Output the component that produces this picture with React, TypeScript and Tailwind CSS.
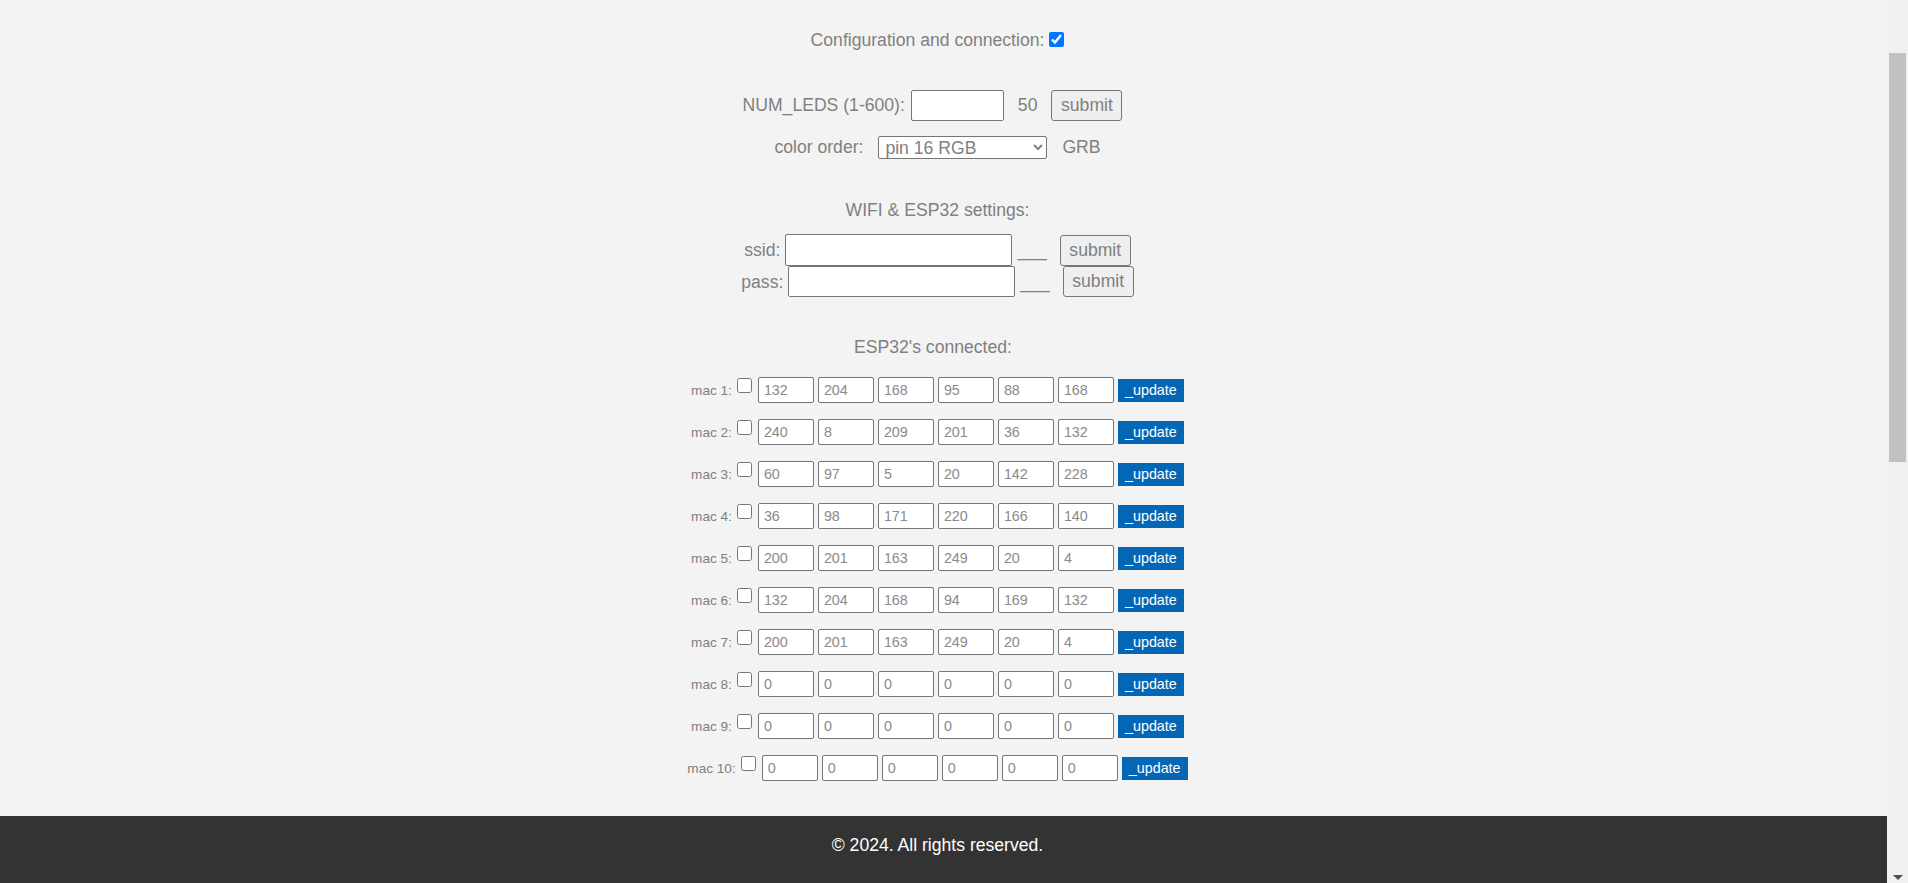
const macs: string[][] = [
  ["132", "204", "168", "95", "88", "168"],
  ["240", "8", "209", "201", "36", "132"],
  ["60", "97", "5", "20", "142", "228"],
  ["36", "98", "171", "220", "166", "140"],
  ["200", "201", "163", "249", "20", "4"],
  ["132", "204", "168", "94", "169", "132"],
  ["200", "201", "163", "249", "20", "4"],
  ["0", "0", "0", "0", "0", "0"],
  ["0", "0", "0", "0", "0", "0"],
  ["0", "0", "0", "0", "0", "0"],
];

function SubmitButton() {
  return (
    <button className="w-[71px] h-[31px] bg-[#efefef] border border-[#767676] rounded-[3px] text-[#808080] text-[17.6px] leading-none">
      submit
    </button>
  );
}

function MacRow({ index, values }: { index: number; values: string[] }) {
  return (
    <div className="flex items-center justify-center h-[26px]">
      <span className="text-[13.6px] text-[#808080] leading-none">mac {index}:</span>
      <input
        type="checkbox"
        className="w-[15px] h-[15px] ml-[5px] mr-[6px] self-start mt-[1px]"
      />
      <div className="flex gap-[4px]">
        {values.map((v, i) => (
          <input
            key={i}
            type="text"
            defaultValue={v}
            className="w-[56px] h-[26px] bg-white border border-[#767676] rounded-[2px] pl-[5px] text-[14.3px] text-[#8a8a8a]"
          />
        ))}
      </div>
      <button className="ml-[4px] w-[66px] h-[23px] bg-[#0467b5] text-white text-[14.3px] leading-none">
        _update
      </button>
    </div>
  );
}

export default function App() {
  return (
    <div
      className="h-screen overflow-hidden flex flex-col bg-[#f3f3f3] pr-[21px]"
      style={{ fontFamily: '"Liberation Sans", Arial, sans-serif' }}
    >
      <main className="flex-1 flex flex-col items-center pr-[12px] pt-[30px] text-[#808080] text-[17.6px]">
        <div className="flex items-center h-[20px]">
          <span>Configuration and connection:</span>
          <input
            type="checkbox"
            defaultChecked
            className="w-[15px] h-[15px] ml-[5px] mb-[2px] accent-[#0075ff]"
          />
        </div>

        <div className="flex items-center mt-[40px] pr-[10px]">
          <span>NUM_LEDS (1-600):</span>
          <input
            type="text"
            className="ml-[6px] w-[93px] h-[31px] bg-white border border-[#767676] rounded-[2px]"
          />
          <span className="ml-[14px]">50</span>
          <span className="ml-[14px]">
            <SubmitButton />
          </span>
        </div>

        <div className="flex items-center mt-[13px]">
          <span>color order:</span>
          <select
            defaultValue="pin 16 RGB"
            className="ml-[15px] w-[169px] h-[23px] bg-white border border-[#767676] rounded-[2px] text-[17.6px] leading-none pl-[2px] text-[#808080]"
          >
            <option>pin 16 RGB</option>
            <option>pin 16 GRB</option>
            <option>pin 16 BRG</option>
          </select>
          <span className="ml-[15px]">GRB</span>
        </div>

        <div className="mt-[40px] h-[20px] flex items-center">WIFI &amp; ESP32 settings:</div>

        <div className="flex items-center mt-[14px]">
          <span>ssid:</span>
          <input
            type="text"
            className="ml-[5px] w-[227px] h-[32px] bg-white border border-[#767676] rounded-[2px]"
          />
          <span className="ml-[5px]">___</span>
          <span className="ml-[13px]">
            <SubmitButton />
          </span>
        </div>
        <div className="flex items-center">
          <span>pass:</span>
          <input
            type="password"
            className="ml-[5px] w-[227px] h-[31px] bg-white border border-[#767676] rounded-[2px]"
          />
          <span className="ml-[5px]">___</span>
          <span className="ml-[13px]">
            <SubmitButton />
          </span>
        </div>

        <div className="mt-[40px] h-[20px] flex items-center pr-[9px]">ESP32's connected:</div>

        <div className="mt-[20px] flex flex-col gap-[16px]">
          {macs.map((m, i) => (
            <MacRow key={i} index={i + 1} values={m} />
          ))}
        </div>
      </main>

      <footer className="h-[67px] bg-[#333333] flex items-center justify-center pr-[12px] pb-[8px]">
        <span className="text-white text-[17.6px] whitespace-nowrap">
          © 2024. All rights reserved.
        </span>
      </footer>

      <div className="fixed right-0 top-0 w-[21px] h-screen bg-[#f1f1f1]">
        <div className="absolute top-[53px] left-[2px] w-[17px] h-[409px] bg-[#c1c1c1]" />
        <div className="absolute bottom-[3px] left-[6px] w-0 h-0 border-l-[5px] border-r-[5px] border-t-[5px] border-l-transparent border-r-transparent border-t-[#505050]" />
      </div>
    </div>
  );
}
